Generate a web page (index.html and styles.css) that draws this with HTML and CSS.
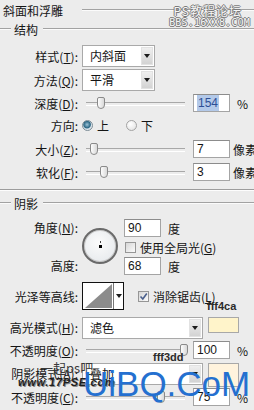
FILE: index.html
```html
<!DOCTYPE html>
<html lang="zh-CN">
<head>
  <meta charset="UTF-8" />
  <title>斜面和浮雕</title>
  <link rel="stylesheet" href="styles.css">
</head>
<body>
  <div class="panel">

    <!-- Title -->
    <div class="title"><span>斜面和浮雕</span><i class="rule"></i></div>

    <!-- 结构 -->
    <div class="legend"><i class="rule lead"></i><span>结构</span><i class="rule"></i></div>

    <div class="row r-style">
      <span class="lbl">样式(<u>T</u>):</span>
      <div class="select"><span class="val">内斜面</span><span class="btn"></span></div>
    </div>
    <div class="row r-method">
      <span class="lbl">方法(<u>Q</u>):</span>
      <div class="select"><span class="val">平滑</span><span class="btn"></span></div>
    </div>
    <div class="row r-depth">
      <span class="lbl">深度(<u>D</u>):</span>
      <div class="slider"><span class="thumb" style="left: 11px"></span></div>
      <div class="num"><span class="sel">154</span></div>
      <span class="unit">%</span>
    </div>
    <div class="row r-dir">
      <span class="lbl">方向:</span>
      <span class="radio on"></span><span class="opt">上</span>
      <span class="radio"></span><span class="opt">下</span>
    </div>
    <div class="row r-size">
      <span class="lbl">大小(<u>Z</u>):</span>
      <div class="slider"><span class="thumb" style="left: 4px"></span></div>
      <div class="num">7</div>
      <span class="unit px">像素</span>
    </div>
    <div class="row r-soft">
      <span class="lbl">软化(<u>F</u>):</span>
      <div class="slider"><span class="thumb" style="left: 14px"></span></div>
      <div class="num">3</div>
      <span class="unit px">像素</span>
    </div>

    <div class="sep"></div>

    <!-- 阴影 -->
    <div class="legend"><i class="rule lead"></i><span>阴影</span><i class="rule"></i></div>

    <div class="angle">
      <span class="lbl a1">角度(<u>N</u>):</span>
      <div class="dial"><span class="dot"></span></div>
      <div class="cell a1"><div class="num">90</div><span class="unit">度</span></div>
      <div class="cell a2"><span class="check"></span><span>使用全局光(<u>G</u>)</span></div>
      <span class="lbl a3">高度:</span>
      <div class="cell a3"><div class="num">68</div><span class="unit">度</span></div>
    </div>

    <div class="row r-contour">
      <span class="lbl">光泽等高线:</span>
      <div class="contour">
        <svg width="30" height="26" viewBox="0 0 30 26">
          <polygon points="2,25 29,1 29,25" fill="#8c8c8c" />
        </svg>
        <span class="btn"></span>
      </div>
      <span class="check on">
        <svg width="9" height="9" viewBox="0 0 9 9"><path d="M1.5 4.5 L3.8 7 L7.8 1.5" fill="none" stroke="#4a5f8c" stroke-width="1.6" /></svg>
      </span>
      <span>消除锯齿(<u>L</u>)</span>
    </div>

    <div class="row r-hmode">
      <span class="lbl">高光模式(<u>H</u>):</span>
      <div class="select wide"><span class="val">滤色</span><span class="btn"></span></div>
      <span class="swatch" style="background: #fff4ca"></span>
    </div>
    <div class="row r-op1">
      <span class="lbl">不透明度(<u>O</u>):</span>
      <div class="slider"><span class="thumb" style="left: 94px"></span></div>
      <div class="num">100</div>
      <span class="unit">%</span>
    </div>
    <div class="row r-smode">
      <span class="lbl">阴影模式(<u>A</u>):</span>
      <div class="select wide"><span class="val">叠加</span><span class="btn"></span></div>
      <span class="swatch" style="background: #fff3dd"></span>
    </div>
    <div class="row r-op2">
      <span class="lbl">不透明度(<u>C</u>):</span>
      <div class="slider"><span class="thumb" style="left: 71px"></span></div>
      <div class="num">75</div>
      <span class="unit">%</span>
    </div>

    <!-- annotations / watermarks -->
    <span class="note n1">fff4ca</span>
    <span class="note n2">fff3dd</span>
    <div class="wm-top">
      <span class="wm-a">PS教程论坛</span>
      <span class="wm-b">BBS.16XX8.COM</span>
    </div>
    <span class="wm-ps">一起ps吧</span>
    <span class="wm-17">www.17PSE.com</span>
    <span class="wm-uibq">UiBQ.CoM</span>
  </div>
</body>
</html>
```

FILE: styles.css
```css
* { box-sizing: border-box; margin: 0; padding: 0; }
html, body {
  width: 254px;
  height: 410px;
  overflow: hidden;
  background: #ececec;
  font-family: "Noto Sans CJK SC", sans-serif;
  font-size: 12px;
  color: #151515;
}

u { text-decoration: underline; text-underline-offset: 1px; }

.panel {
  position: relative;
  height: 410px;
  overflow: hidden;
}

/* HEADINGS */
.rule {
  display: block;
  height: 2px;
  border-top: 1px solid #a2a2a2;
  border-bottom: 1px solid #fbfbfb;
}

.title {
  display: flex;
  align-items: center;
  height: 20px;
  padding-left: 3px;
}

.title .rule { flex: 1; margin-left: 19px; }

.legend {
  display: flex;
  align-items: center;
  height: 18px;
}

.legend .lead { width: 11px; margin-right: 3px; }
.legend .rule:last-child { flex: 1; margin-left: 5px; }

.sep {
  height: 2px;
  margin-top: 8px;
  margin-bottom: 3px;
  border-top: 1px solid #9c9c9c;
  border-bottom: 1px solid #fdfdfd;
}

/* ROWS */
.row {
  display: flex;
  align-items: center;
  height: 18px;
  white-space: nowrap;
}

.row > * { flex: none; }

.lbl {
  flex: none;
  width: 78px;
  margin-right: 4px;
  text-align: right;
  white-space: nowrap;
}

.r-style  { height: 22px; margin-top: 7px; }
.r-method { height: 22px; margin-top: 2px; }
.r-depth  { margin-top: 3px; }
.r-dir    { margin-top: 4px; }
.r-size   { margin-top: 6px; }
.r-soft   { margin-top: 5px; }
.r-contour { height: 28px; margin-top: 7px; }
.r-hmode  { height: 22px; margin-top: 7px; align-items: flex-start; }
.r-op1    { margin-top: 2px; }
.r-smode  { height: 22px; margin-top: 4px; align-items: flex-start; }
.r-op2    { margin-top: 3px; }

.r-hmode .lbl, .r-smode .lbl { line-height: 22px; }

/* SELECT */
.select {
  display: flex;
  width: 73px;
  height: 22px;
  border: 1px solid #a9a9a9;
  background: #fff;
}

.select.wide { width: 121px; }

.select .val {
  flex: 1;
  padding-left: 7px;
  line-height: 20px;
}

.btn {
  display: flex;
  align-items: center;
  justify-content: center;
  width: 12px;
  margin: 1px;
  border: 1px solid #e2e2e2;
  background: linear-gradient(#efefef, #d3d3d3);
}

.btn::after {
  content: "";
  border-left: 3px solid transparent;
  border-right: 3px solid transparent;
  border-top: 4px solid #1c1c1c;
}

/* SLIDER */
.slider {
  position: relative;
  width: 99px;
  height: 18px;
  margin-left: 4px;
  margin-right: 8px;
}

.slider::before {
  content: "";
  position: absolute;
  left: 0;
  right: 0;
  top: 8px;
  height: 2px;
  border-top: 1px solid #a8a8a8;
  border-bottom: 1px solid #fff;
}

.thumb {
  position: absolute;
  top: 3px;
  width: 8px;
  height: 12px;
  border: 1px solid #8a8a8a;
  border-radius: 2px 2px 4px 4px;
  background: linear-gradient(90deg, #fdfdfd, #d9d9d9);
}

/* NUMBER INPUT */
.num {
  flex: none;
  width: 37px;
  height: 18px;
  padding-left: 3px;
  border: 1px solid #a4a4a4;
  border-top-color: #8c8c8c;
  background: #fff;
  line-height: 16px;
  font-family: "Liberation Sans", sans-serif;
  font-size: 12px;
}

.num .sel {
  display: inline-block;
  padding: 0 1px;
  background: #b3c9e9;
  color: #2d4f96;
}

.unit { margin-left: 7px; white-space: nowrap; }
.unit.px { margin-left: 3px; }

/* RADIO */
.radio {
  width: 11px;
  height: 11px;
  border: 1px solid #a3a3a3;
  border-radius: 50%;
  background: radial-gradient(circle at 40% 35%, #ffffff, #dedede);
}

.radio.on {
  background: radial-gradient(circle at 45% 40%, #9ec4d8 0, #2c6784 45%, #d8e2ea 60%, #f2f2f2 100%);
  border-color: #7c8c96;
}

.opt { margin-left: 4px; margin-right: 17px; }

/* ANGLE */
.angle {
  display: grid;
  grid-template-columns: 78px 46px auto;
  grid-template-rows: 18px 20px 18px;
  margin-top: 7px;
}

.angle .lbl { width: auto; margin-right: 0; line-height: 18px; }
.angle .a1 { grid-row: 1; }
.angle .a2 { grid-row: 2; grid-column: 3; }
.angle .a3 { grid-row: 3; }
.angle .lbl.a1, .angle .lbl.a3 { grid-column: 1; }
.angle .cell.a1, .angle .cell.a3 { grid-column: 3; }

.cell {
  display: flex;
  align-items: center;
  white-space: nowrap;
}

.dial {
  grid-column: 2;
  grid-row: 1 / 4;
  align-self: start;
  display: flex;
  align-items: center;
  justify-content: center;
  width: 36px;
  height: 36px;
  margin-top: 9px;
  margin-left: 4px;
  border: 2px solid #6a6a6a;
  border-radius: 50%;
  background: radial-gradient(circle at 45% 40%, #fbfbfb, #e2e6ea);
  box-shadow: inset 0 0 0 1px #c8c8c8;
}

.dot {
  position: relative;
  width: 3px;
  height: 3px;
  background: #000;
}

.dot::before {
  content: "";
  position: absolute;
  left: 1px;
  top: -4px;
  width: 1px;
  height: 2px;
  background: #444;
}

.check {
  display: flex;
  align-items: center;
  justify-content: center;
  width: 11px;
  height: 11px;
  margin-left: 1px;
  margin-right: 4px;
  border: 1px solid #969696;
  background: linear-gradient(135deg, #d6d6d6, #fbfbfb);
}

.r-contour .check { margin-left: 14px; }

/* CONTOUR */
.contour {
  display: flex;
  width: 42px;
  height: 28px;
  border: 1px solid #111;
  background: #fff;
}

.contour svg { display: block; }

.contour .btn {
  width: 10px;
  margin: 0;
  border: none;
  border-left: 1px solid #777;
  background: #fff;
}

/* SWATCH */
.swatch {
  width: 31px;
  height: 16px;
  margin-left: 5px;
  border: 1px solid #a8a8a8;
}

.r-smode .swatch { height: 24px; }

/* ANNOTATIONS */
.note {
  position: absolute;
  font-family: "Liberation Sans", sans-serif;
  font-weight: bold;
  font-size: 11px;
  color: #2a2a2a;
}

.n1 { left: 207px; top: 300px; }
.n2 { left: 153px; top: 351px; }

.wm-top {
  position: absolute;
  right: 4px;
  top: 3px;
  display: flex;
  flex-direction: column;
  align-items: flex-end;
  color: #f6f6f6;
  text-shadow: 1px 0 #7a7a7a, -1px 0 #7a7a7a, 0 1px #7a7a7a, 0 -1px #7a7a7a;
}

.wm-a { font-size: 12px; line-height: 15px; letter-spacing: 1px; margin-right: 8px; }
.wm-b {
  font-family: "DejaVu Sans Mono", monospace;
  font-size: 10px;
  line-height: 10px;
  letter-spacing: 0.2px;
}

.wm-ps {
  position: absolute;
  left: 40px;
  top: 358px;
  font-size: 13px;
  color: #3a3a3a;
}

.wm-17 {
  position: absolute;
  left: 18px;
  top: 376px;
  font-family: "Liberation Sans", sans-serif;
  font-weight: bold;
  font-style: italic;
  font-size: 11px;
  letter-spacing: 0.7px;
  color: #1e1e1e;
  text-shadow: 1px 1px #8a8a8a;
}

.wm-uibq {
  position: absolute;
  left: 83px;
  top: 366px;
  font-family: "Liberation Sans", sans-serif;
  font-size: 35px;
  line-height: 35px;
  color: #2470d0;
}
```
